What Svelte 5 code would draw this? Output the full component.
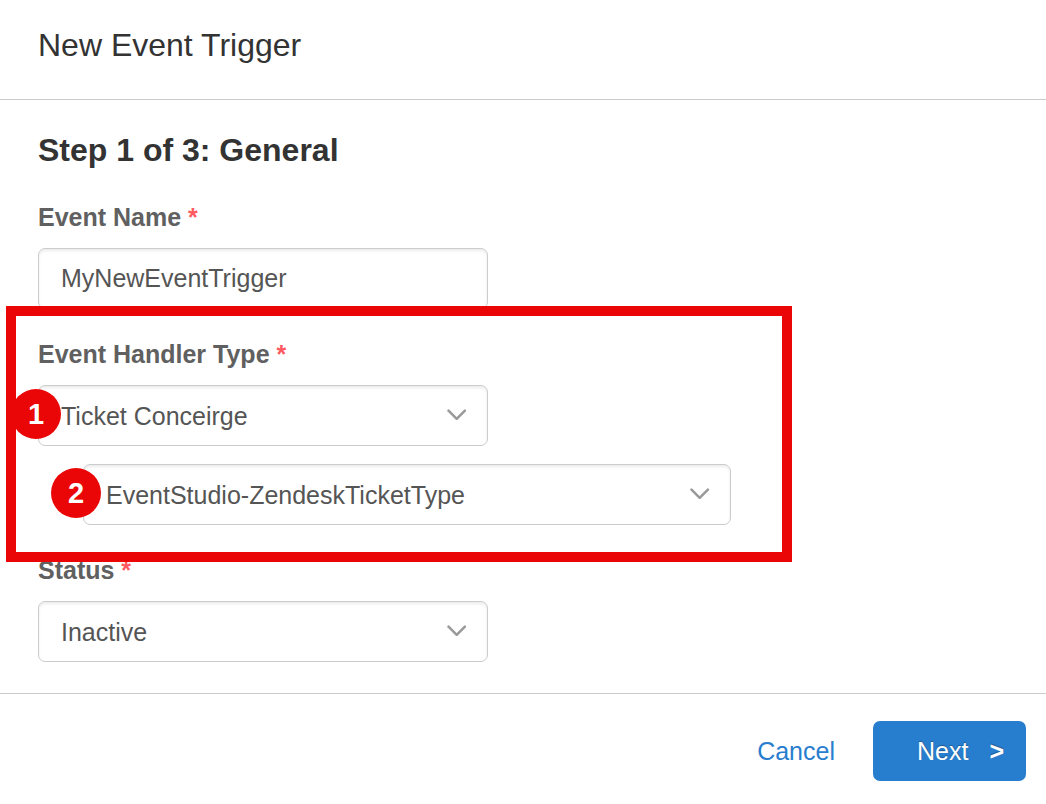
<script lang="ts">
    let eventName = $state("MyNewEventTrigger");
    let handlerType = $state("Ticket Conceirge");
    let ticketType = $state("EventStudio-ZendeskTicketType");
    let status = $state("Inactive");
</script>

{#snippet chevron()}
    <svg class="chevron" width="20" height="12" viewBox="0 0 20 12" fill="none" aria-hidden="true">
        <path
            d="M1.5 1.7 L9.7 9.8 L17.9 1.7"
            stroke="#999"
            stroke-width="2.5"
            stroke-linecap="round"
            stroke-linejoin="round"
        />
    </svg>
{/snippet}

<form class="dialog" onsubmit={(e) => e.preventDefault()}>
    <header>
        <h1>New Event Trigger</h1>
    </header>

    <main>
        <h2>Step 1 of 3: General</h2>

        <div class="group">
            <label for="event-name">Event Name <span class="required">*</span></label>
            <div class="field">
                <input id="event-name" type="text" bind:value={eventName} />
            </div>
        </div>

        <div class="group">
            <label for="handler-type">Event Handler Type <span class="required">*</span></label>
            <div class="field">
                <select id="handler-type" bind:value={handlerType}>
                    <option>Ticket Conceirge</option>
                </select>
                {@render chevron()}
                <span class="badge">1</span>
            </div>
            <div class="field nested">
                <select aria-label="Ticket type" bind:value={ticketType}>
                    <option>EventStudio-ZendeskTicketType</option>
                </select>
                {@render chevron()}
                <span class="badge">2</span>
            </div>
            <div class="highlight"></div>
        </div>

        <div class="group">
            <label for="status">Status <span class="required">*</span></label>
            <div class="field">
                <select id="status" bind:value={status}>
                    <option>Inactive</option>
                    <option>Active</option>
                </select>
                {@render chevron()}
            </div>
        </div>
    </main>

    <footer>
        <button type="button" class="cancel">Cancel</button>
        <button type="submit" class="next">Next <span class="arrow">&gt;</span></button>
    </footer>
</form>

<style>
    :global(body) {
        background: #fff;
    }

    .dialog {
        font-family: "Liberation Sans", Arial, sans-serif;
        font-size: 25px;
        line-height: 30px;
        color: #555;
    }

    header {
        padding: 25px 38px 34px;
        border-bottom: 1px solid #ccc;
    }

    h1,
    h2 {
        margin: 0;
        color: #333;
        font-size: 32px;
        line-height: 40px;
    }

    h1 {
        font-weight: 400;
    }

    h2 {
        font-weight: 700;
        margin-bottom: 32px;
    }

    main {
        padding: 30px 38px 31px;
    }

    .group {
        position: relative;
        margin-bottom: 30px;
    }

    .group:last-child {
        margin-bottom: 0;
    }

    label {
        display: block;
        margin-bottom: 16px;
        font-weight: 700;
        color: #606060;
    }

    .required {
        color: #ff5a5f;
    }

    .field {
        position: relative;
        max-width: 450px;
    }

    .nested {
        max-width: 648px;
        margin-top: 18px;
        margin-left: 45px;
    }

    input,
    select {
        display: block;
        width: 100%;
        height: 61px;
        box-sizing: border-box;
        padding: 0 22px;
        border: 1px solid #ccc;
        border-radius: 7px;
        background: #fff;
        box-shadow: inset 0 2px 3px rgba(0, 0, 0, 0.08);
        font: inherit;
        color: #555;
        appearance: none;
        outline: none;
    }

    input:focus,
    select:focus {
        border-color: #287ece;
    }

    .chevron {
        position: absolute;
        top: 24px;
        right: 21px;
        pointer-events: none;
    }

    .badge {
        position: absolute;
        z-index: 1;
        top: 4px;
        left: -27px;
        width: 50px;
        height: 50px;
        border-radius: 50%;
        background: #ea0606;
        color: #fff;
        font-size: 29px;
        font-weight: 700;
        line-height: 50px;
        text-align: center;
    }

    .nested .badge {
        left: -32px;
    }

    /* callout frame drawn over the handler fields */
    .highlight {
        position: absolute;
        top: -33px;
        bottom: -37px;
        left: -32px;
        width: 786px;
        box-sizing: border-box;
        border: 10px solid #ea0606;
        pointer-events: none;
        z-index: 1;
    }

    footer {
        display: flex;
        justify-content: flex-end;
        align-items: center;
        gap: 17px;
        padding: 27px 20px 23px;
        border-top: 1px solid #ccc;
    }

    button {
        height: 60px;
        border: none;
        border-radius: 7px;
        font: inherit;
        cursor: pointer;
    }

    .cancel {
        padding: 0 21px;
        background: transparent;
        color: #287ece;
    }

    .next {
        display: flex;
        align-items: center;
        gap: 21px;
        padding: 0 22px 0 44px;
        background: #287ece;
        color: #fff;
        text-shadow: 0 -1px 1px rgba(0, 0, 0, 0.3);
    }

    .arrow {
        font-weight: 700;
    }
</style>
